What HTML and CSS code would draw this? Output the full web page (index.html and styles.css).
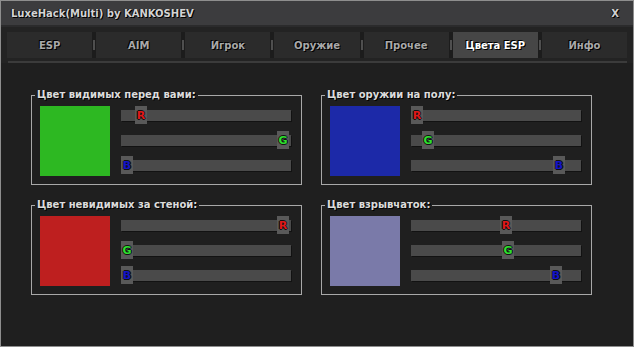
FILE: index.html
```html
<!DOCTYPE html>
<html lang="ru">
  <head>
    <meta charset="UTF-8" />
    <title>LuxeHack(Multi) by KANKOSHEV</title>
    <link rel="stylesheet" href="styles.css">
  </head>
  <body>
    <div class="window">
      <header class="titlebar">
        <span class="title">LuxeHack(Multi) by KANKOSHEV</span>
        <span class="close">X</span>
      </header>

      <div class="tabbar">
        <nav class="tabs">
          <div class="tab">ESP</div>
          <span class="tab-sep"></span>
          <div class="tab">AIM</div>
          <span class="tab-sep"></span>
          <div class="tab">Игрок</div>
          <span class="tab-sep"></span>
          <div class="tab">Оружие</div>
          <span class="tab-sep"></span>
          <div class="tab">Прочее</div>
          <span class="tab-sep"></span>
          <div class="tab active">Цвета ESP</div>
          <span class="tab-sep"></span>
          <div class="tab">Инфо</div>
        </nav>
        <div class="tab-line"></div>
      </div>

      <main class="content">
        <fieldset class="group">
          <legend>Цвет видимых перед вами:</legend>
          <div class="swatch" style="background: #2db822"></div>
          <div class="sliders">
            <div class="track"><span class="thumb r" style="left: 14px">R</span></div>
            <div class="track"><span class="thumb g" style="left: 156px">G</span></div>
            <div class="track"><span class="thumb b" style="left: 0px">B</span></div>
          </div>
        </fieldset>

        <fieldset class="group">
          <legend>Цвет оружии на полу:</legend>
          <div class="swatch" style="background: #1c29a8"></div>
          <div class="sliders">
            <div class="track"><span class="thumb r" style="left: 0px">R</span></div>
            <div class="track"><span class="thumb g" style="left: 11px">G</span></div>
            <div class="track"><span class="thumb b" style="left: 142px">B</span></div>
          </div>
        </fieldset>

        <fieldset class="group">
          <legend>Цвет невидимых за стеной:</legend>
          <div class="swatch" style="background: #be1f1f"></div>
          <div class="sliders">
            <div class="track"><span class="thumb r" style="left: 156px">R</span></div>
            <div class="track"><span class="thumb g" style="left: 0px">G</span></div>
            <div class="track"><span class="thumb b" style="left: 0px">B</span></div>
          </div>
        </fieldset>

        <fieldset class="group">
          <legend>Цвет взрывчаток:</legend>
          <div class="swatch" style="background: #7a7aa9"></div>
          <div class="sliders">
            <div class="track"><span class="thumb r" style="left: 89px">R</span></div>
            <div class="track"><span class="thumb g" style="left: 91px">G</span></div>
            <div class="track"><span class="thumb b" style="left: 139px">B</span></div>
          </div>
        </fieldset>
      </main>
    </div>
  </body>
</html>
```

FILE: styles.css
```css
* {
  margin: 0;
  padding: 0;
  box-sizing: border-box;
}

body {
  font-family: "DejaVu Sans", Verdana, sans-serif;
  font-weight: bold;
  background-color: #1f1f1f;
  color: #d8d8d8;
}

.window {
  width: 634px;
  height: 347px;
  border: 1px solid #8e8e8e;
  background-color: #1f1f1f;
  display: flex;
  flex-direction: column;
}

.titlebar {
  height: 26px;
  background-color: #3c3c3e;
  border-bottom: 2px solid #2b2b2c;
  display: flex;
  align-items: center;
  justify-content: space-between;
  padding: 1px 14px 0 10px;
  font-size: 10px;
  text-shadow: 1px 1px 0 #000, -1px 0 0 #111;
}

.title {
  color: #d4d4d4;
}

.close {
  color: #cfcfcf;
}

.tabbar {
  background-color: #232323;
  padding: 5px 6px 0 6px;
}

.tabs {
  display: flex;
  height: 26px;
}

.tab {
  flex: 1;
  display: flex;
  align-items: center;
  justify-content: center;
  background-color: #2b2b2b;
  color: #a9a9a9;
  font-size: 10px;
  text-shadow: 1px 1px 0 #000, -1px -1px 0 #000;
}

.tab.active {
  background-color: #464646;
  color: #fff;
}

.tab-sep {
  width: 4px;
  background-color: #1c1c1c;
  display: flex;
  align-items: center;
  justify-content: center;
}

.tab-sep::after {
  content: "";
  display: block;
  width: 2px;
  height: 10px;
  background-color: #4f4f4f;
}

.tab-line {
  height: 2px;
  margin: 3px 0 0 1px;
  background-color: #3b3b3b;
}

.content {
  flex: 1;
  display: grid;
  grid-template-columns: 271px 271px;
  align-content: start;
  column-gap: 19px;
  row-gap: 14px;
  padding: 26px 0 0 30px;
}

.group {
  width: 271px;
  border: 1px solid #a8a8a8;
  padding: 5px 9px 8px 8px;
  display: flex;
  gap: 11px;
  min-width: 0;
}

.group legend {
  margin-left: -5px;
  padding: 0 2px;
  font-size: 10px;
  line-height: 12px;
  color: #dcdcdc;
  text-shadow: 1px 1px 0 #000;
}

.swatch {
  width: 70px;
  height: 70px;
}

.sliders {
  width: 170px;
  display: flex;
  flex-direction: column;
  gap: 14px;
  padding-top: 4px;
}

.track {
  position: relative;
  height: 11px;
  background-color: #4a4a4a;
  box-shadow: 1px 1px 0 #121212;
}

.thumb {
  position: absolute;
  top: -4px;
  width: 12px;
  height: 18px;
  background-color: #595959;
  display: flex;
  align-items: center;
  justify-content: center;
  font-size: 11px;
  text-shadow: 1px 0 0 #111, -1px 0 0 #111, 0 1px 0 #111, 0 -1px 0 #111;
}

.thumb.r {
  color: #e01818;
}

.thumb.g {
  color: #2ee02e;
}

.thumb.b {
  color: #1414c8;
}
```
